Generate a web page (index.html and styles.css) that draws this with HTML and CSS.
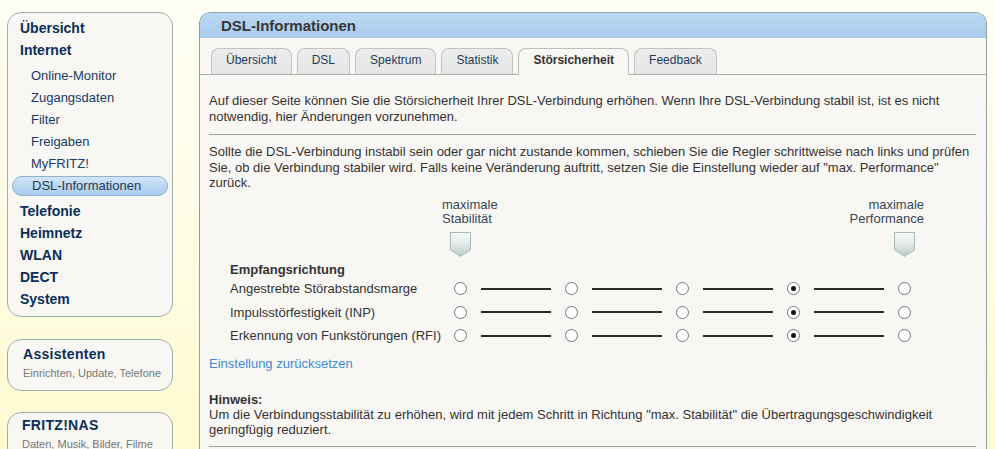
FILE: index.html
```html
<!DOCTYPE html>
<html lang="de">
<head>
<meta charset="utf-8">
<title>DSL-Informationen</title>
<link rel="stylesheet" href="styles.css">
</head>
<body>
<div class="page">
  <aside class="sidebar">
    <nav class="box menu">
      <a class="top">Übersicht</a>
      <a class="top">Internet</a>
      <div class="sub">
        <a class="sub-item">Online-Monitor</a>
        <a class="sub-item">Zugangsdaten</a>
        <a class="sub-item">Filter</a>
        <a class="sub-item">Freigaben</a>
        <a class="sub-item">MyFRITZ!</a>
        <a class="sub-item active"><span class="pill">DSL-Informationen</span></a>
      </div>
      <a class="top">Telefonie</a>
      <a class="top">Heimnetz</a>
      <a class="top">WLAN</a>
      <a class="top">DECT</a>
      <a class="top">System</a>
    </nav>
    <div class="box promo">
      <div class="promo-title">Assistenten</div>
      <div class="promo-sub">Einrichten, Update, Telefone</div>
    </div>
    <div class="box promo promo-nas">
      <div class="promo-title">FRITZ!NAS</div>
      <div class="promo-sub">Daten, Musik, Bilder, Filme</div>
    </div>
  </aside>

  <main class="panel">
    <div class="panel-head">DSL-Informationen</div>
    <div class="tabs">
      <a class="tab">Übersicht</a>
      <a class="tab">DSL</a>
      <a class="tab">Spektrum</a>
      <a class="tab">Statistik</a>
      <a class="tab active">Störsicherheit</a>
      <a class="tab">Feedback</a>
    </div>
    <div class="content">
      <p class="intro">Auf dieser Seite können Sie die Störsicherheit Ihrer DSL-Verbindung erhöhen. Wenn Ihre DSL-Verbindung stabil ist, ist es nicht notwendig, hier Änderungen vorzunehmen.</p>
      <hr class="rule">
      <p class="text">Sollte die DSL-Verbindung instabil sein oder gar nicht zustande kommen, schieben Sie die Regler schrittweise nach links und prüfen Sie, ob die Verbindung stabiler wird. Falls keine Veränderung auftritt, setzen Sie die Einstellung wieder auf "max. Performance" zurück.</p>

      <div class="scale-head">
        <div class="scale-label">maximale<br>Stabilität</div>
        <div class="scale-label right">maximale<br>Performance</div>
      </div>
      <div class="markers">
        <svg class="marker" width="21" height="25" viewBox="0 0 21 25"><defs><linearGradient id="mg1" x1="0" y1="0" x2="0" y2="1"><stop offset="0" stop-color="#f7f8f8"/><stop offset="0.45" stop-color="#e6ebeb"/><stop offset="1" stop-color="#b7c9c9"/></linearGradient></defs><path d="M0.5 0.5 H20.5 V18 L10.5 24.3 L0.5 18 Z" fill="url(#mg1)" stroke="#a9b9b9"/></svg>
        <svg class="marker" width="21" height="25" viewBox="0 0 21 25"><defs><linearGradient id="mg2" x1="0" y1="0" x2="0" y2="1"><stop offset="0" stop-color="#f7f8f8"/><stop offset="0.45" stop-color="#e6ebeb"/><stop offset="1" stop-color="#b7c9c9"/></linearGradient></defs><path d="M0.5 0.5 H20.5 V18 L10.5 24.3 L0.5 18 Z" fill="url(#mg2)" stroke="#a9b9b9"/></svg>
      </div>

      <div class="settings">
        <div class="settings-title">Empfangsrichtung</div>
        <div class="row">
          <span class="row-label">Angestrebte Störabstandsmarge</span>
          <span class="radio"></span><span class="seg"></span>
          <span class="radio"></span><span class="seg"></span>
          <span class="radio"></span><span class="seg"></span>
          <span class="radio on"></span><span class="seg"></span>
          <span class="radio"></span>
        </div>
        <div class="row">
          <span class="row-label">Impulsstörfestigkeit (INP)</span>
          <span class="radio"></span><span class="seg"></span>
          <span class="radio"></span><span class="seg"></span>
          <span class="radio"></span><span class="seg"></span>
          <span class="radio on"></span><span class="seg"></span>
          <span class="radio"></span>
        </div>
        <div class="row">
          <span class="row-label">Erkennung von Funkstörungen (RFI)</span>
          <span class="radio"></span><span class="seg"></span>
          <span class="radio"></span><span class="seg"></span>
          <span class="radio"></span><span class="seg"></span>
          <span class="radio on"></span><span class="seg"></span>
          <span class="radio"></span>
        </div>
      </div>

      <a class="reset">Einstellung zurücksetzen</a>

      <div class="hint">
        <strong>Hinweis:</strong><br>
        Um die Verbindungsstabilität zu erhöhen, wird mit jedem Schritt in Richtung "max. Stabilität" die Übertragungsgeschwindigkeit geringfügig reduziert.
      </div>
      <hr class="rule rule-bottom">
    </div>
  </main>
</div>
</body>
</html>
```

FILE: styles.css
```css
html, body {
  margin: 0;
  height: 100%;
}
body {
  font-family: "Liberation Sans", Arial, sans-serif;
  background: linear-gradient(to bottom, #fffff6 0%, #fffde6 50%, #fffbd0 100%);
  color: #333;
  overflow: hidden;
}
.page {
  display: flex;
  align-items: flex-start;
  padding: 12px 0 0 7px;
}

/* ---------- sidebar ---------- */
.sidebar {
  width: 166px;
  flex: none;
  display: flex;
  flex-direction: column;
}
.box {
  background: #f8f7f3;
  border: 1px solid #9eafae;
  border-radius: 14px;
}
.menu {
  padding: 4px 0 6px;
}
.menu a {
  display: block;
  cursor: pointer;
}
.top {
  font-size: 14px;
  font-weight: bold;
  line-height: 22px;
  padding-left: 12px;
  color: #0b2d5a;
}
.sub {
  margin: 4px 0 2px;
}
.sub-item {
  font-size: 13px;
  line-height: 22px;
  height: 22px;
  padding-left: 23px;
  color: #173b68;
}
.sub-item.active {
  padding-left: 0;
}
.pill {
  display: block;
  box-sizing: border-box;
  margin: 1px 4px 0;
  height: 20px;
  line-height: 18px;
  padding-left: 19px;
  border: 1px solid #8fb1cb;
  border-radius: 10px;
  background: linear-gradient(to bottom, #d3e6f8 0%, #bcd8f3 50%, #a8ccef 100%);
  color: #263a50;
}
.promo {
  margin-top: 22px;
  padding: 5px 0 10px 15px;
}
.promo-nas {
  margin-top: 21px;
  padding-top: 3px;
  padding-left: 14px;
}
.promo-title {
  font-size: 14px;
  font-weight: bold;
  line-height: 18px;
  color: #0b2d5a;
  letter-spacing: 0.3px;
}
.promo-sub {
  margin-top: 3px;
  font-size: 11px;
  line-height: 14px;
  color: #777;
}

/* ---------- main panel ---------- */
.panel {
  margin-left: 26px;
  width: 788px;
  flex: none;
  box-sizing: border-box;
  border: 1px solid #8da1a1;
  border-bottom: none;
  border-radius: 12px 12px 0 0;
  background: #f9f7f3;
  overflow: hidden;
  min-height: 460px;
}
.panel-head {
  height: 25px;
  line-height: 25px;
  padding-left: 21px;
  font-size: 15px;
  font-weight: bold;
  color: #363636;
  background: linear-gradient(to bottom, #b9d8f3 0%, #a9cbea 100%);
}
.tabs {
  display: flex;
  align-items: flex-end;
  gap: 5px;
  padding: 10px 0 0 11px;
  border-bottom: 1px solid #a9b1b1;
}
.tab {
  box-sizing: border-box;
  height: 26px;
  line-height: 23px;
  padding: 0 14px;
  font-size: 12px;
  color: #223a55;
  background: linear-gradient(to bottom, #ececec, #e6e6e6);
  border: 1px solid #c3c3c3;
  border-bottom: none;
  border-radius: 8px 8px 0 0;
  cursor: pointer;
}
.tab.active {
  height: 27px;
  margin-bottom: -1px;
  background: #f9f7f3;
  font-weight: bold;
  color: #333;
  border-color: #b9bebe;
}

/* ---------- content ---------- */
.content {
  padding: 0 10px 0 9px;
  font-size: 13px;
}
.intro {
  margin: 18px 0 0;
  line-height: 16px;
}
.rule {
  margin: 9px 0 0;
  border: none;
  height: 1px;
  background: #9aa6a6;
}
.text {
  margin: 9px 0 0;
  line-height: 15.5px;
}
.scale-head {
  display: flex;
  justify-content: space-between;
  margin: 7.5px 0 0 233px;
  width: 482px;
}
.scale-label {
  font-size: 13px;
  line-height: 13.5px;
  color: #37475a;
}
.scale-label.right {
  text-align: right;
}
.markers {
  display: flex;
  justify-content: space-between;
  margin: 6.5px 0 0 241px;
  width: 465px;
  height: 25px;
}
.marker {
  display: block;
}
.settings {
  margin-top: 3px;
  padding-left: 21px;
  display: flex;
  flex-direction: column;
  gap: 3.5px;
}
.settings-title {
  font-weight: bold;
  line-height: 19px;
  margin-bottom: -3.5px;
  color: #333;
}
.row {
  display: flex;
  align-items: center;
  height: 20px;
}
.row-label {
  flex: 0 0 224px;
  white-space: nowrap;
  color: #333;
}
.radio {
  flex: none;
  box-sizing: border-box;
  width: 13px;
  height: 13px;
  border-radius: 50%;
  border: 1px solid #767676;
  background: #fff;
  display: flex;
  align-items: center;
  justify-content: center;
}
.radio.on::after {
  content: "";
  width: 5px;
  height: 5px;
  border-radius: 50%;
  background: #151515;
}
.seg {
  flex: none;
  width: 70px;
  height: 2px;
  margin: 0 14px;
  background: #2a2a2a;
}
.reset {
  display: block;
  margin-top: 10px;
  line-height: 16px;
  color: #3d8ad6;
  cursor: pointer;
}
.hint {
  margin-top: 20px;
  line-height: 15px;
  color: #333;
}
.rule-bottom {
  margin-top: 9.5px;
}
```
